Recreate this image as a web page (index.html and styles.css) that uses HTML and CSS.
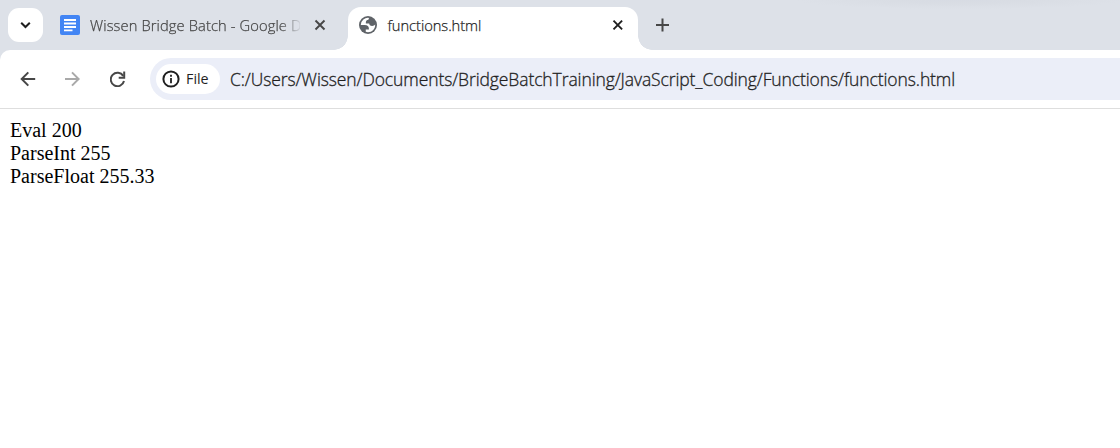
FILE: index.html
```html
<!DOCTYPE html>
<html lang="en">
<head>
<meta charset="utf-8">
<title>functions.html</title>
<link rel="stylesheet" href="styles.css">
</head>
<body>
<div class="tab-strip">
  <button class="tab-search" aria-label="Search tabs">
    <svg width="35" height="34" viewBox="0 0 35 34"><path d="M13.2 14.7l4.3 4.3 4.3-4.3" fill="none" stroke="#1f1f1f" stroke-width="2"/></svg>
  </button>
  <div class="tab">
    <svg class="favicon" width="20" height="20" viewBox="0 0 20 20"><rect width="20" height="20" rx="2" fill="#4285f4"/><path d="M4 5h12M4 8.500h12M4 12h12M4 15.300h8.500" stroke="#fff" stroke-width="1.800"/></svg>
    <span class="tab-title faded">Wissen Bridge Batch - Google D</span>
    <svg class="close" width="12" height="12" viewBox="0 0 12 12"><path d="M1.5 1.5l9 9m0-9l-9 9" stroke="#474747" stroke-width="1.9"/></svg>
  </div>
  <div class="tab active">
    <svg class="favicon" width="18" height="18" viewBox="2 2 20 20"><circle cx="12" cy="12" r="10" fill="#5f6368"/><path fill="#fff" d="M4 12h4.400c3.407.022 4.922 1.730 4.543 5.127H9.488v2.470a8.004 8.004 0 0 0 10.498-8.083C19.327 12.504 18.200 13 16.600 13c-2.137 0-3.206-.916-3.206-2.750h-3.748c-.274-2.728.683-4.092 2.870-4.092 0-.975.327-1.597.811-1.970A8.004 8.004 0 0 0 4 12z"/></svg>
    <span class="tab-title">functions.html</span>
    <svg class="close" width="12" height="12" viewBox="0 0 12 12"><path d="M1.5 1.700l8.600 8.600m0-8.600l-8.600 8.600" stroke="#1f1f1f" stroke-width="1.900"/></svg>
  </div>
  <svg class="new-tab" width="14" height="14" viewBox="0 0 14 14"><path d="M7.500 .5v13M1 7h13" stroke="#474747" stroke-width="2"/></svg>
</div>
<div class="toolbar">
  <svg class="nav" width="16" height="16" viewBox="0 0 16 16"><path d="M15.200 8H2M8.300 1.400L1.700 8l6.600 6.600" fill="none" stroke="#474747" stroke-width="2"/></svg>
  <svg class="nav" width="16" height="16" viewBox="0 0 16 16"><path d="M0 8H13.500M7 1.400L13.600 8l-6.600 6.600" fill="none" stroke="#a9a9a9" stroke-width="2"/></svg>
  <svg class="nav" width="16" height="16" viewBox="0 0 16 16"><path d="M13.200 5A6.700 6.700 0 1 0 14 10" fill="none" stroke="#474747" stroke-width="2"/><path d="M14.200.5v6.200H8.700" fill="none" stroke="#474747" stroke-width="2"/></svg>
  <div class="omnibox">
    <div class="file-chip">
      <svg width="18" height="18" viewBox="0 0 18 18"><circle cx="9" cy="9" r="7.600" fill="none" stroke="#1f1f1f" stroke-width="2"/><path d="M9 8v5.200M9 4.800v2" stroke="#1f1f1f" stroke-width="1.800"/></svg>
      <span class="chip-label">File</span>
    </div>
    <span class="url">C:/Users/Wissen/Documents/BridgeBatchTraining/JavaScript_Coding/Functions/functions.html</span>
  </div>
</div>
<main class="page">Eval 200<br>ParseInt 255<br>ParseFloat 255.33</main>
</body>
</html>
```
FILE: styles.css
```css
* { box-sizing: border-box; }
body { margin: 0; background: #fff; font-family: "Open Sans", "Noto Sans", sans-serif; height: 448px; overflow: hidden; }
svg { display: block; flex: none; }
.tab-strip { height: 60px; margin-bottom: -10px; display: flex; align-items: flex-start; background: radial-gradient(ellipse 165px 9px at 960px 0, #d7dbe3 0, #d9dde4 40%, #dde1e8 100%); }
.tab-search { width: 35px; height: 34px; margin: 8px 7px 0 8px; padding: 0; border: 0; border-radius: 11px; background: #fff; }
.tab { display: flex; align-items: center; width: 298px; height: 34px; margin-top: 8px; padding: 0 22px 0 10px; color: #474747; }
.tab.active { position: relative; width: 290px; height: 43px; margin-top: 7px; padding: 0 14px 7px 11px; border-radius: 13px 13px 0 0; background: #fff; color: #1f1f1f; }
.tab.active::before, .tab.active::after { content: ""; position: absolute; bottom: 0; width: 14px; height: 14px; }
.tab.active::before { left: -14px; background: radial-gradient(circle at 0 0, transparent 13.5px, #fff 14px); }
.tab.active::after { right: -14px; background: radial-gradient(circle at 100% 0, transparent 13.5px, #fff 14px); }
.tab-title { flex: 1; margin-left: 10.5px; font-size: 14.7px; font-weight: 300; letter-spacing: -0.05px; -webkit-text-stroke: 0.25px currentColor; line-height: 22px; white-space: nowrap; }
.tab-title.faded { flex: none; width: 210px; margin-left: 10px; margin-right: 14px; letter-spacing: 0.11px; -webkit-mask-image: linear-gradient(to right, #000 190px, transparent 212px); mask-image: linear-gradient(to right, #000 190px, transparent 212px); }
.new-tab { margin: 18px 0 0 17px; }
.toolbar { position: relative; display: flex; align-items: center; height: 59px; padding-left: 20px; background: #fff; border-bottom: 1px solid #dedede; border-radius: 10px 0 0 0; }
.nav { margin-right: 29px; margin-bottom: 1px; }
.omnibox { display: flex; align-items: center; flex: 1; height: 42px; margin-left: -5px; padding-left: 6px; border-radius: 21px 0 0 21px; background: #ebeef8; }
.file-chip { display: flex; align-items: center; width: 64px; height: 30px; padding-left: 6px; border-radius: 15px; background: #fff; color: #1f1f1f; }
.chip-label { margin-left: 6px; font-size: 14.3px; font-weight: 500; line-height: 20px; }
.url { margin-left: 10px; font-size: 17.5px; font-weight: 300; letter-spacing: -0.1px; -webkit-text-stroke: 0.3px currentColor; line-height: 26px; color: #1f1f1f; white-space: nowrap; }
.page { padding: 10px 10px 0; font-family: "Liberation Serif", serif; font-size: 20px; line-height: 23px; color: #000; }
```
